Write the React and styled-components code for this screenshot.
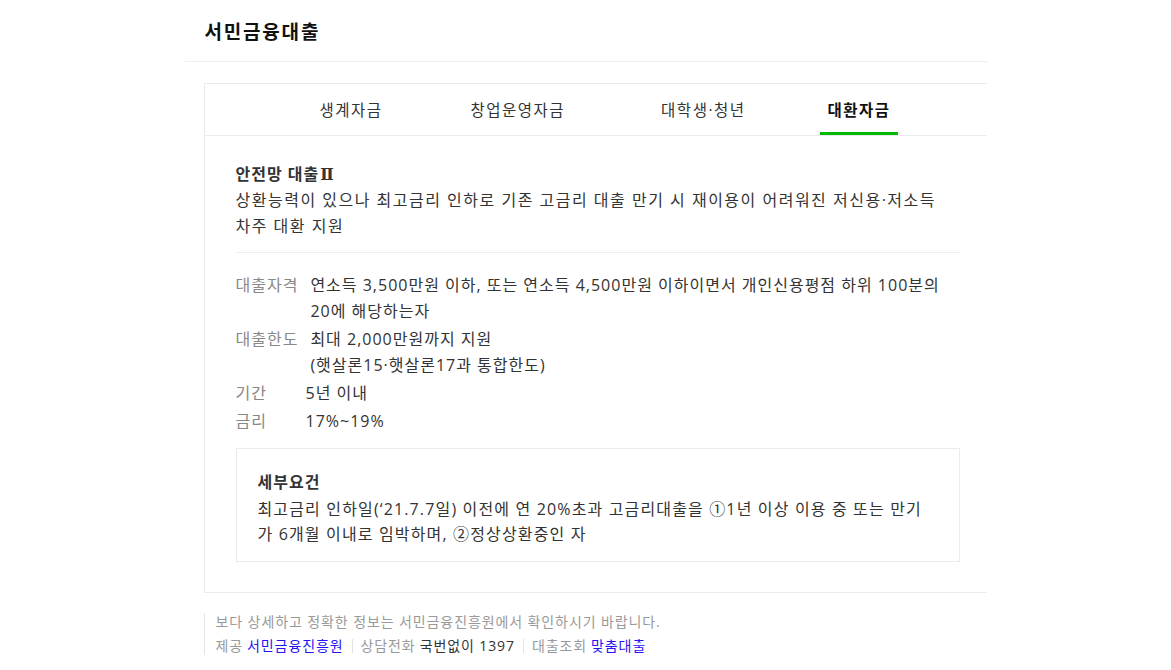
import styled, { createGlobalStyle } from 'styled-components'

const GlobalStyle = createGlobalStyle`
  body {
    margin: 0;
    background: #fff;
    font-family: "Open Sans", "Noto Sans CJK KR", sans-serif;
    color: #333;
  }
`

const Page = styled.div`
  width: 802px;
  margin: 0 auto;
`

const Header = styled.header`
  height: 61px;
  padding-left: 20px;
  display: flex;
  align-items: center;
  border-bottom: 1px solid #eee;
`

const Title = styled.h1`
  margin: 0;
  font-size: 19px;
  font-weight: 700;
  letter-spacing: 1.8px;
  color: #111;
`

const Card = styled.section`
  margin: 21px 0 0 19px;
  border: 1px solid #ebebeb;
  border-right: none;
`

const TabList = styled.ul`
  list-style: none;
  margin: 0;
  padding: 0 0 0 108px;
  display: flex;
  height: 51px;
  border-bottom: 1px solid #ebebeb;
`

const Tab = styled.li`
  margin-left: ${(props) => props.offset}px;
  padding: 0 7px;
  display: flex;
  align-items: center;
  font-size: 15.5px;
  letter-spacing: 1.5px;
  color: ${(props) => (props.active ? '#111' : '#333')};
  font-weight: ${(props) => (props.active ? 700 : 400)};
  box-shadow: ${(props) => (props.active ? 'inset 0 -3px 0 #00b900' : 'none')};
`

const Body = styled.div`
  padding: 26px 27px 30px 31px;
`

const Intro = styled.div`
  padding-bottom: 13px;
  border-bottom: 1px solid #eee;
`

const ProductName = styled.strong`
  display: block;
  font-size: 16px;
  line-height: 24px;
  letter-spacing: 1px;
  color: #333;
`

const Numeral = styled.span`
  font-family: "DejaVu Serif", serif;
  font-size: 16px;
  margin-left: 1px;
  letter-spacing: 0;
`

const Description = styled.p`
  margin: 0;
  padding-right: 15px;
  font-size: 16px;
  line-height: 26px;
  letter-spacing: 1.5px;
  color: #333;
`

const InfoList = styled.dl`
  margin: 19px 0 0;
`

const InfoRow = styled.div`
  display: flex;
  margin-bottom: 2px;
  font-size: 16px;
  line-height: 26px;
  letter-spacing: 1px;
`

const Label = styled.dt`
  flex-shrink: 0;
  box-sizing: border-box;
  min-width: 70px;
  padding-right: 12px;
  color: #888;
`

const Value = styled.dd`
  margin: 0;
  color: #333;
  flex: 1;
`

const Detail = styled.div`
  margin-top: 14px;
  border: 1px solid #ebebeb;
  padding: 20px 34px 14px 21px;
`

const DetailTitle = styled.strong`
  display: block;
  margin-bottom: 2px;
  font-size: 16px;
  line-height: 26px;
  letter-spacing: 1px;
  color: #333;
`

const DetailText = styled.p`
  margin: 0;
  font-size: 16px;
  line-height: 25px;
  letter-spacing: 1.15px;
  color: #333;
`

const Footer = styled.div`
  margin: 20px 0 0 19px;
  padding-left: 11px;
  border-left: 1px solid #e5e5e5;
  font-size: 14px;
  line-height: 18px;
  letter-spacing: 0.9px;
  color: #999;
`

const FooterLine = styled.p`
  margin: 0 0 6px;
  display: flex;
  align-items: center;
`

const Dark = styled.span`
  color: #333;
  margin-left: 4px;
`

const Blue = styled.a`
  color: #2414f0;
  text-decoration: none;
  margin-left: 4px;
`

const Divider = styled.span`
  display: inline-block;
  width: 1px;
  height: 14px;
  background: #e2e2e2;
  margin: 0 8px;
`

const tabs = [
  { name: '생계자금', offset: 0 },
  { name: '창업운영자금', offset: 74 },
  { name: '대학생·청년', offset: 82 },
  { name: '대환자금', offset: 68, active: true },
]

const infos = [
  {
    label: '대출자격',
    value: '연소득 3,500만원 이하, 또는 연소득 4,500만원 이하이면서 개인신용평점 하위 100분의 20에 해당하는자',
  },
  {
    label: '대출한도',
    value: (
      <>
        최대 2,000만원까지 지원
        <br />
        (햇살론15·햇살론17과 통합한도)
      </>
    ),
  },
  { label: '기간', value: '5년 이내' },
  { label: '금리', value: '17%~19%' },
]

function App() {
  return (
    <>
      <GlobalStyle />
      <Page>
        <Header>
          <Title>서민금융대출</Title>
        </Header>
        <Card>
          <TabList>
            {tabs.map((tab) => (
              <Tab key={tab.name} offset={tab.offset} active={tab.active}>
                {tab.name}
              </Tab>
            ))}
          </TabList>
          <Body>
            <Intro>
              <ProductName>
                안전망 대출<Numeral>Ⅱ</Numeral>
              </ProductName>
              <Description>
                상환능력이 있으나 최고금리 인하로 기존 고금리 대출 만기 시 재이용이 어려워진 저신용·저소득 차주 대환 지원
              </Description>
            </Intro>
            <InfoList>
              {infos.map((info) => (
                <InfoRow key={info.label}>
                  <Label>{info.label}</Label>
                  <Value>{info.value}</Value>
                </InfoRow>
              ))}
            </InfoList>
            <Detail>
              <DetailTitle>세부요건</DetailTitle>
              <DetailText>
                최고금리 인하일(‘21.7.7일) 이전에 연 20%초과 고금리대출을 ①1년 이상 이용 중 또는 만기가 6개월 이내로 임박하며, ②정상상환중인 자
              </DetailText>
            </Detail>
          </Body>
        </Card>
        <Footer>
          <FooterLine>보다 상세하고 정확한 정보는 서민금융진흥원에서 확인하시기 바랍니다.</FooterLine>
          <FooterLine>
            제공<Blue href="#">서민금융진흥원</Blue>
            <Divider />
            상담전화<Dark>국번없이 1397</Dark>
            <Divider />
            대출조회<Blue href="#">맞춤대출</Blue>
          </FooterLine>
        </Footer>
      </Page>
    </>
  )
}

export default App
